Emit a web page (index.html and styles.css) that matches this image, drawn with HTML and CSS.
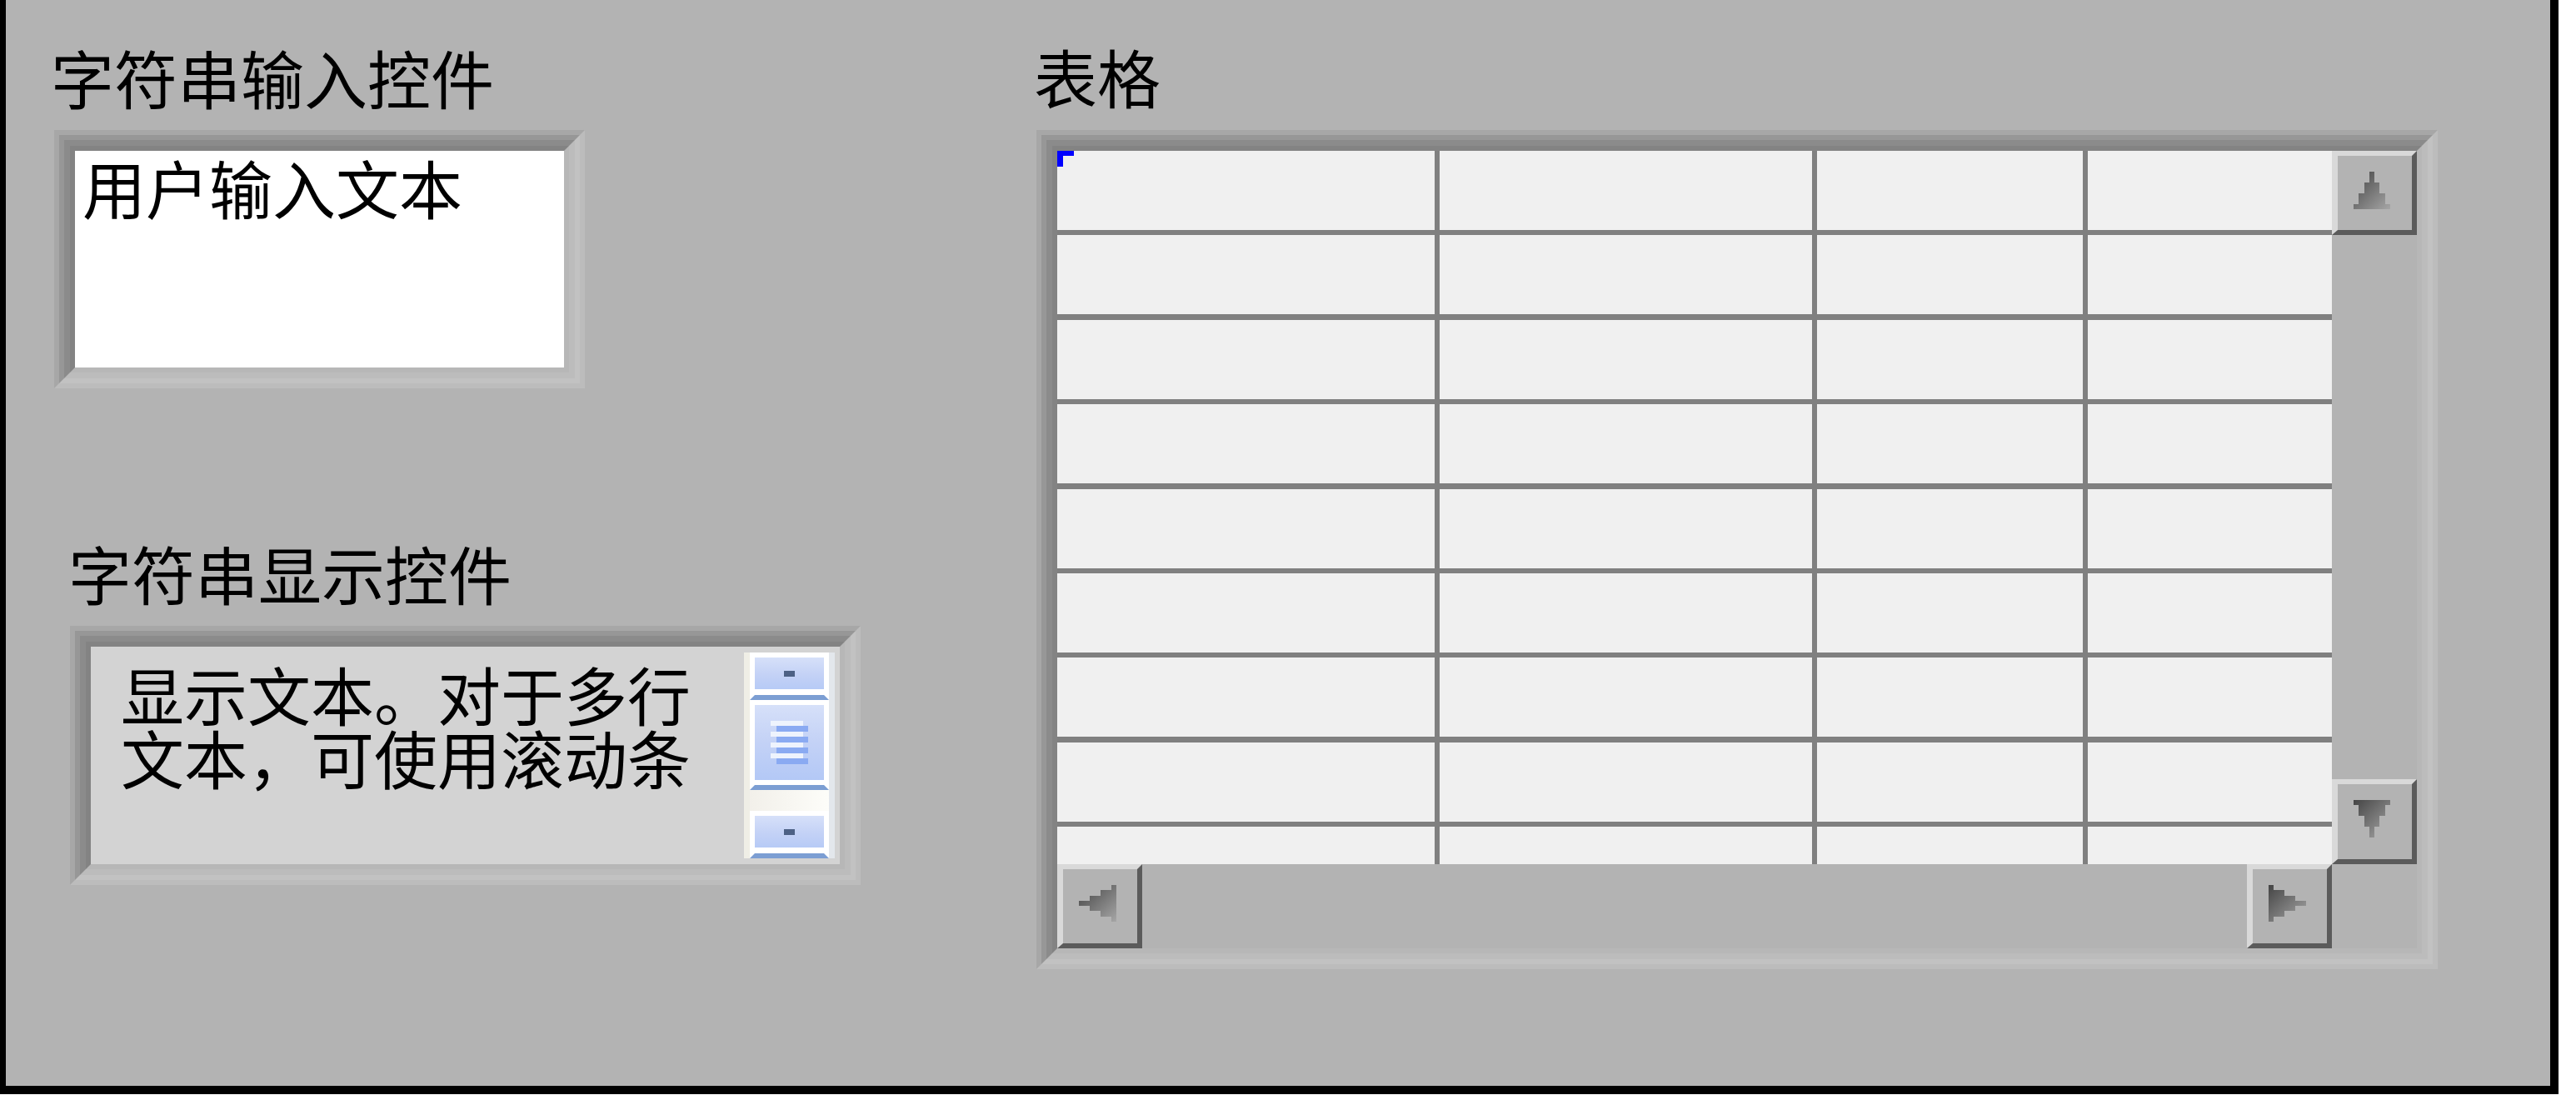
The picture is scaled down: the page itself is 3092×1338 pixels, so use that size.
FILE: index.html
```html
<!DOCTYPE html>
<html lang="zh-CN">
<head>
<meta charset="utf-8">
<title>前面板</title>
<link rel="stylesheet" href="styles.css">
</head>
<body>
<div class="panel">
  <div class="left-col">
    <div class="label label-in">字符串输入控件</div>
    <div class="frame frame-in">
      <div class="f2"><div class="f3"><div class="f4">
        <div class="input-box">用户输入文本</div>
      </div></div></div>
    </div>

    <div class="label label-disp">字符串显示控件</div>
    <div class="frame frame-disp">
      <div class="f2"><div class="f3"><div class="f4">
        <div class="disp-box">
          <div class="disp-text">显示文本。对于多行文本，可使用滚动条</div>
          <div class="xp-sb">
            <div class="xp-col">
              <div class="xp-btn"><span class="xp-dot"></span></div>
              <div class="xp-thumb">
                <div class="grip">
                  <span class="gw"></span><span class="gb"></span>
                  <span class="gw"></span><span class="gb"></span>
                  <span class="gw"></span><span class="gb"></span>
                  <span class="gw"></span><span class="gb"></span>
                </div>
              </div>
              <div class="xp-track"></div>
              <div class="xp-btn"><span class="xp-dot"></span></div>
            </div>
          </div>
        </div>
      </div></div></div>
    </div>
  </div>

  <div class="right-col">
    <div class="label label-table">表格</div>
    <div class="frame frame-table">
      <div class="f2"><div class="f3"><div class="f4">
        <div class="table-body">
          <div class="cells">
            <div class="cell"><span class="cursor"></span></div><div class="cell"></div><div class="cell"></div><div class="cell"></div>
            <div class="cell"></div><div class="cell"></div><div class="cell"></div><div class="cell"></div>
            <div class="cell"></div><div class="cell"></div><div class="cell"></div><div class="cell"></div>
            <div class="cell"></div><div class="cell"></div><div class="cell"></div><div class="cell"></div>
            <div class="cell"></div><div class="cell"></div><div class="cell"></div><div class="cell"></div>
            <div class="cell"></div><div class="cell"></div><div class="cell"></div><div class="cell"></div>
            <div class="cell"></div><div class="cell"></div><div class="cell"></div><div class="cell"></div>
            <div class="cell"></div><div class="cell"></div><div class="cell"></div><div class="cell"></div>
            <div class="cell"></div><div class="cell"></div><div class="cell"></div><div class="cell"></div>
          </div>

          <div class="vscroll">
            <div class="lv-btn lv-btn-v">
              <svg class="arrow-v" viewBox="0 0 7 7" preserveAspectRatio="none" shape-rendering="crispEdges">
                <defs><linearGradient id="gu" x1="0" y1="0" x2="1" y2="1"><stop offset="0" stop-color="#444"/><stop offset="1" stop-color="#a6a6a6"/></linearGradient></defs>
                <polygon fill="url(#gu)" points="3,0 4,0 4,2 5,2 5,4 6,4 6,6 7,6 7,7 0,7 0,6 1,6 1,4 2,4 2,2 3,2"/>
              </svg>
            </div>
            <div class="lv-track"></div>
            <div class="lv-btn lv-btn-v lv-btn-down">
              <svg class="arrow-v" viewBox="0 0 7 7" preserveAspectRatio="none" shape-rendering="crispEdges">
                <defs><linearGradient id="gd" x1="0" y1="0" x2="1" y2="1"><stop offset="0" stop-color="#444"/><stop offset="1" stop-color="#a6a6a6"/></linearGradient></defs>
                <polygon fill="url(#gd)" points="0,0 7,0 7,1 6,1 6,3 5,3 5,5 4,5 4,7 3,7 3,5 2,5 2,3 1,3 1,1 0,1"/>
              </svg>
            </div>
          </div>

          <div class="hscroll">
            <div class="lv-btn lv-btn-h">
              <svg class="arrow-h" viewBox="0 0 7 7" preserveAspectRatio="none" shape-rendering="crispEdges">
                <defs><linearGradient id="gl" x1="0" y1="0" x2="1" y2="1"><stop offset="0" stop-color="#444"/><stop offset="1" stop-color="#a6a6a6"/></linearGradient></defs>
                <polygon fill="url(#gl)" points="0,3 2,3 2,2 4,2 4,1 6,1 6,0 7,0 7,7 6,7 6,6 4,6 4,5 2,5 2,4 0,4"/>
              </svg>
            </div>
            <div class="lv-track"></div>
            <div class="lv-btn lv-btn-h">
              <svg class="arrow-h" viewBox="0 0 7 7" preserveAspectRatio="none" shape-rendering="crispEdges">
                <defs><linearGradient id="gr" x1="0" y1="0" x2="1" y2="1"><stop offset="0" stop-color="#444"/><stop offset="1" stop-color="#a6a6a6"/></linearGradient></defs>
                <polygon fill="url(#gr)" points="0,0 1,0 1,1 3,1 3,2 5,2 5,3 7,3 7,4 5,4 5,5 3,5 3,6 1,6 1,7 0,7"/>
              </svg>
            </div>
          </div>

          <div class="corner"></div>
        </div>
      </div></div></div>
    </div>
  </div>
</div>
</body>
</html>
```

FILE: styles.css
```css
html, body {
  margin: 0;
  padding: 0;
  background: #ffffff;
}

.panel {
  width: 3054px;
  height: 1303px;
  border-left: 7px solid #000;
  border-right: 10px solid #000;
  border-bottom: 10px solid #000;
  background: #b3b3b3;
  display: flex;
  align-items: flex-start;
}

.label,
.input-box,
.disp-text {
  font-family: "Noto Sans CJK SC", "Noto Sans CJK JP", sans-serif;
  font-size: 76px;
  line-height: 76px;
  color: #000;
  white-space: normal;
}

.label {
  height: 76px;
  white-space: nowrap;
}

/* ---------- left column ---------- */
.left-col {
  width: 1030px;
  flex: none;
  padding-top: 54px;
  display: flex;
  flex-direction: column;
  align-items: flex-start;
}

.label-in { margin-left: 54px; }
.frame-in { margin-top: 26px; margin-left: 58px; }
.label-disp { margin-top: 183px; margin-left: 75px; }
.frame-disp { margin-top: 26px; margin-left: 77px; }

/* ---------- sunken LabVIEW frame (4 layers) ---------- */
.frame {
  border-style: solid;
  border-width: 6px;
  border-color: #a7a7a7 #bcbcbc #bcbcbc #a7a7a7;
}
.f2 {
  border-style: solid;
  border-width: 6px;
  border-color: #979797 #c2c2c2 #c2c2c2 #979797;
}
.f3 {
  border-style: solid;
  border-width: 7px;
  border-color: #8b8b8b #bcbcbc #bcbcbc #8b8b8b;
}
.f4 {
  border-style: solid;
  border-width: 6px;
  border-color: #838383 #b7b7b7 #b7b7b7 #838383;
}

/* ---------- string input ---------- */
.input-box {
  width: 587px;
  height: 260px;
  box-sizing: border-box;
  background: #ffffff;
  padding: 5px 0 0 9px;
}

/* ---------- string display ---------- */
.disp-box {
  width: 899px;
  height: 261px;
  background: #d3d3d3;
  display: flex;
  align-items: flex-start;
}
.disp-text {
  flex: 1;
  padding: 18px 0 0 36px;
}

.xp-sb {
  width: 109px;
  height: 247px;
  margin: 7px 6px 0 0;
  box-sizing: border-box;
  padding: 0 7px;
  background: linear-gradient(to right, #efeee6 0, #efeee6 7px, transparent 7px, transparent 102px, #e3e7ec 102px);
  display: flex;
  flex: none;
}
.xp-col {
  flex: 1;
  display: flex;
  flex-direction: column;
}
.xp-btn,
.xp-thumb {
  box-sizing: border-box;
  border: 6px solid #ffffff;
  border-bottom-color: #7c9ed3;
  background: linear-gradient(180deg, #d6e0f9 0%, #c4d2f6 45%, #b1c7f6 100%);
  display: flex;
  align-items: center;
  justify-content: center;
}
.xp-btn {
  height: 57px;
  box-shadow: inset 0 -7px 0 #ffffff;
  padding-bottom: 7px;
}
.xp-thumb {
  height: 108px;
  box-shadow: inset 0 -6px 0 #ffffff;
  padding-bottom: 6px;
}
.xp-dot {
  width: 13px;
  height: 7px;
  background: #4d6185;
}
.xp-track {
  height: 25px;
  background: linear-gradient(to right, #f2f0ea, #fdfdf9);
}
.grip {
  width: 45px;
  display: flex;
  flex-direction: column;
}
.gw {
  display: block;
  height: 6px;
  width: 39px;
  background: #eef3fd;
}
.gb {
  display: block;
  height: 7px;
  width: 38px;
  margin-left: 7px;
  background: #8aaaf2;
}

/* ---------- table ---------- */
.right-col {
  flex: none;
  margin-left: 204px;
  padding-top: 53px;
  display: flex;
  flex-direction: column;
  align-items: flex-start;
}
.frame-table {
  margin-top: 27px;
  margin-left: 3px;
}

.table-body {
  display: grid;
  grid-template-columns: 1530px 102px;
  grid-template-rows: 856px 101px;
  background: #b3b3b3;
}

.cells {
  display: grid;
  grid-template-columns: 453px 447px 319px 293px;
  grid-template-rows: repeat(8, 95px) 45px;
  column-gap: 6px;
  row-gap: 6.375px;
  background: #808080;
  overflow: hidden;
}
.cell {
  background: #f0f0f0;
}
.cursor {
  display: block;
  width: 20px;
  height: 19px;
  box-sizing: border-box;
  border-top: 6px solid #0000ff;
  border-left: 7px solid #0000ff;
}

.vscroll {
  display: flex;
  flex-direction: column;
}
.hscroll {
  display: flex;
}
.lv-track {
  flex: 1;
  background: #b3b3b3;
}
.corner {
  background: #b3b3b3;
}

.lv-btn {
  box-sizing: border-box;
  border-style: solid;
  border-width: 6px 6px 6px 7px;
  border-color: #d9d9d9 #5b5b5b #5b5b5b #d9d9d9;
  background: #b3b3b3;
  padding: 19px 0 0 19px;
}
.lv-btn-v {
  height: 101px;
}
.lv-btn-down {
  height: 102px;
}
.lv-btn-h {
  width: 102px;
}
.lv-btn svg {
  display: block;
}
.arrow-v {
  width: 44px;
  height: 45px;
}
.arrow-h {
  width: 45px;
  height: 44px;
}
```
